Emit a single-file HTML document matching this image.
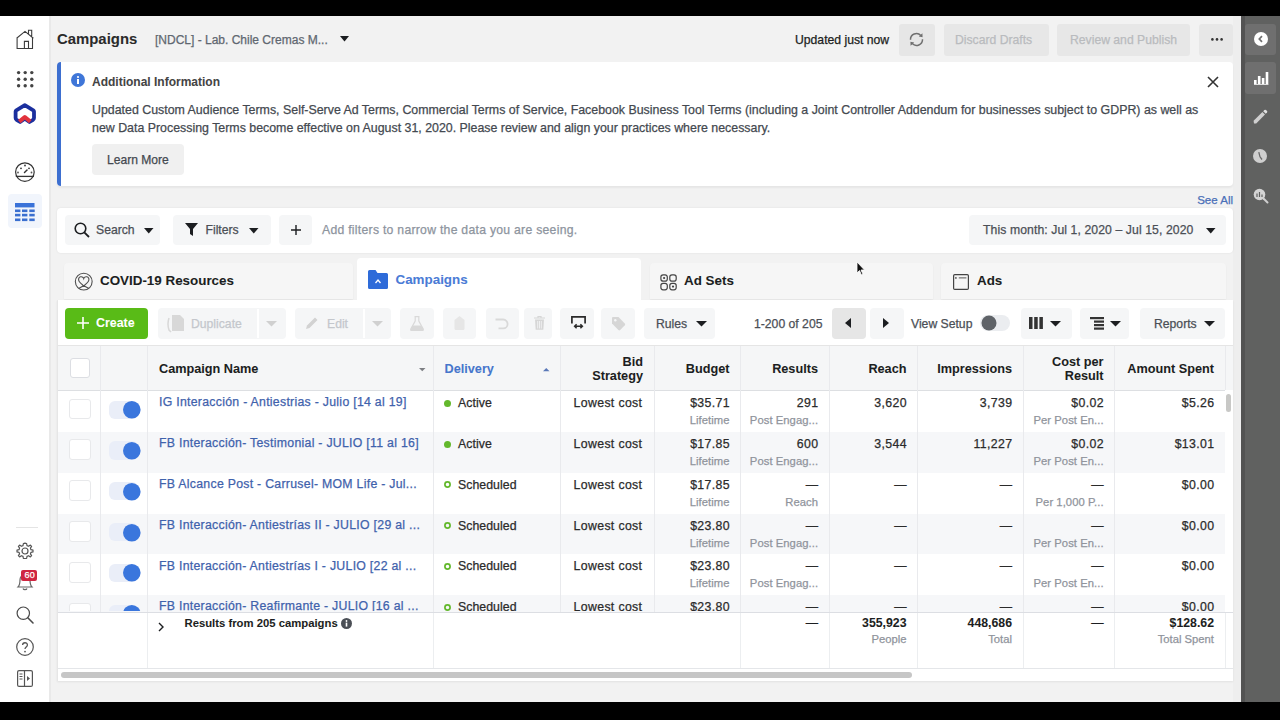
<!DOCTYPE html><html><head><meta charset="utf-8"><style>
*{box-sizing:border-box;margin:0;padding:0}
html,body{width:1280px;height:720px;overflow:hidden;background:#000;font-family:"Liberation Sans",sans-serif;color:#1c1e21}
#app{position:absolute;left:0;top:16px;width:1280px;height:686px;background:#f2f2f2;overflow:hidden}
.a{position:absolute}
.t{position:absolute;white-space:nowrap;line-height:1;-webkit-text-stroke:0.25px currentColor}

.btn{position:absolute;background:#ebebeb;border-radius:4px}
.lbtn{position:absolute;background:#f5f5f5;border-radius:4px}
.r{text-align:right}
svg{position:absolute;overflow:visible}
</style></head><body><div id="app"><div class="a" style="left:0px;top:0px;width:49px;height:686px;background:#fff;"></div><div class="a" style="left:49px;top:0px;width:2px;height:686px;background:#e9e9e9;"></div><svg style="left:16px;top:13px;" width="18" height="21" viewBox="0 0 18 21"><path d="M0.6 9.2 L9 2.4 L17.4 9.2 M1.1 8.6 V19.5 H16.5 V8.6 M8.4 19.5 V12.4 H12.5 V19.5 M12.5 5.6 V1.2 H15.7 V8.2" fill="none" stroke="#3c3c3c" stroke-width="1.1"/></svg><svg style="left:17px;top:55px;" width="17" height="17" viewBox="0 0 17 17"><circle cx="1.6" cy="1.6" r="1.7" fill="#444"/><circle cx="1.6" cy="8.2" r="1.7" fill="#444"/><circle cx="1.6" cy="14.8" r="1.7" fill="#444"/><circle cx="8.2" cy="1.6" r="1.7" fill="#444"/><circle cx="8.2" cy="8.2" r="1.7" fill="#444"/><circle cx="8.2" cy="14.8" r="1.7" fill="#444"/><circle cx="14.8" cy="1.6" r="1.7" fill="#444"/><circle cx="14.8" cy="8.2" r="1.7" fill="#444"/><circle cx="14.8" cy="14.8" r="1.7" fill="#444"/></svg><svg style="left:13px;top:86px;" width="24" height="23" viewBox="0 0 24 23"><path d="M11.8 3.2 L20.3 8.3 Q21 8.8 21 9.6 V16 Q21 17 20 17.8 L16.5 20 L11.8 16.8 L7.1 20 L3.6 17.8 Q2.6 17 2.6 16 V9.6 Q2.6 8.8 3.3 8.3 Z" fill="none" stroke="#1b2f9e" stroke-width="3.8" stroke-linejoin="round"/><path d="M6.3 19.6 L11.8 15 L17.3 19.6" fill="none" stroke="#e2323c" stroke-width="4" stroke-linejoin="round"/></svg><svg style="left:15px;top:146px;" width="20" height="20" viewBox="0 0 20 20"><circle cx="9.9" cy="10.1" r="9.3" fill="none" stroke="#333" stroke-width="1.2"/><path d="M.8 14.4 H19" stroke="#333" stroke-width="1.3"/><path d="M9.5 10.5 L12 8" stroke="#333" stroke-width="1.5" stroke-linecap="round"/><circle cx="10" cy="3.5" r=".9" fill="#333"/><circle cx="6" cy="6.3" r=".9" fill="#333"/><circle cx="14" cy="6.3" r=".9" fill="#333"/><circle cx="3" cy="10.5" r=".9" fill="#555"/><circle cx="16.5" cy="10.5" r=".9" fill="#555"/></svg><div class="a" style="left:8px;top:177.5px;width:34px;height:34.0px;background:#f1f5fc;border-radius:4px"></div><svg style="left:15px;top:186.5px;" width="20" height="19" viewBox="0 0 20 19"><rect x="0" y="0" width="19.5" height="4.4" fill="#3a72d8"/><rect x="0" y="6.5" width="5.4" height="2.6" fill="#3a6fd0"/><rect x="0" y="10.8" width="5.4" height="2.6" fill="#3a6fd0"/><rect x="0" y="15.5" width="5.4" height="2.6" fill="#3a6fd0"/><rect x="7" y="6.5" width="5.4" height="2.6" fill="#3a6fd0"/><rect x="7" y="10.8" width="5.4" height="2.6" fill="#3a6fd0"/><rect x="7" y="15.5" width="5.4" height="2.6" fill="#3a6fd0"/><rect x="14.3" y="6.5" width="5.4" height="2.6" fill="#3a6fd0"/><rect x="14.3" y="10.8" width="5.4" height="2.6" fill="#3a6fd0"/><rect x="14.3" y="15.5" width="5.4" height="2.6" fill="#3a6fd0"/></svg><div class="a" style="left:16px;top:511px;width:22px;height:1px;background:#e4e4e4;"></div><svg style="left:16px;top:526px;" width="18" height="18" viewBox="0 0 18 18"><path d="M9 1.2 L10.6 1.5 L11 3.6 L12.6 4.3 L14.4 3.1 L15.6 4.3 L14.4 6.1 L15 7.7 L17 8.1 V9.9 L15 10.3 L14.4 11.9 L15.6 13.7 L14.4 14.9 L12.6 13.7 L11 14.4 L10.6 16.5 H7.4 L7 14.4 L5.4 13.7 L3.6 14.9 L2.4 13.7 L3.6 11.9 L3 10.3 L1 9.9 V8.1 L3 7.7 L3.6 6.1 L2.4 4.3 L3.6 3.1 L5.4 4.3 L7 3.6 L7.4 1.5 Z" fill="none" stroke="#555" stroke-width="1.2" stroke-linejoin="round"/><circle cx="9" cy="9" r="3" fill="none" stroke="#555" stroke-width="1.2"/></svg><svg style="left:16px;top:555px;" width="18" height="20" viewBox="0 0 18 20"><path d="M2 16 C4 14 4 12 4 9 C4 6 6 4 9 4 C12 4 14 6 14 9 C14 12 14 14 16 16 Z M7 17.5 C7.5 19 10.5 19 11 17.5" fill="none" stroke="#666" stroke-width="1.2"/></svg><div class="a" style="left:21.2px;top:553.7px;width:16.3px;height:11.699999999999932px;background:#cf2540;border-radius:2px"></div><div class="t" style="top:555.46px;font-size:9px;color:#fff;letter-spacing:0.2px;left:24.5px;">60</div><svg style="left:16px;top:590px;" width="19" height="19" viewBox="0 0 19 19"><circle cx="7.3" cy="7.2" r="6.2" fill="none" stroke="#4a4a4a" stroke-width="1.2"/><path d="M11.8 11.8 L17 17" stroke="#4a4a4a" stroke-width="1.6" stroke-linecap="round"/></svg><svg style="left:16px;top:622px;" width="18" height="18" viewBox="0 0 18 18"><circle cx="9" cy="9" r="8.3" fill="none" stroke="#555" stroke-width="1.2"/><path d="M6.6 7 C6.6 4 11.4 4 11.4 7 C11.4 9 9 9 9 11" fill="none" stroke="#555" stroke-width="1.3"/><circle cx="9" cy="13.6" r=".9" fill="#555"/></svg><svg style="left:17px;top:654px;" width="16" height="17" viewBox="0 0 16 17"><rect x=".6" y=".6" width="14.8" height="15.8" rx="1.5" fill="none" stroke="#555" stroke-width="1.2"/><path d="M7.5 .6 V16.4" stroke="#555" stroke-width="1.2"/><path d="M2.5 4 H5.5 M2.5 6.5 H5.5 M2.5 9 H5.5" stroke="#555" stroke-width="1"/><path d="M10 6 L13 8.5 L10 11 Z" fill="#555"/></svg><div class="a" style="left:1233px;top:0px;width:8px;height:686px;background:#eeeeee;"></div><div class="a" style="left:1241px;top:0px;width:39px;height:686px;background:#606160;"></div><div class="a" style="left:1241px;top:0px;width:4px;height:686px;background:#535353;"></div><div class="a" style="left:1245px;top:7.5px;width:30.5px;height:31.0px;background:#6f6f6f;border-radius:3px"></div><svg style="left:1253.75px;top:15.75px;" width="14" height="14" viewBox="0 0 14 14"><circle cx="7" cy="7" r="7" fill="#fff"/><path d="M8 4.2 L5.3 7 L8 9.8" fill="none" stroke="#6f6f6f" stroke-width="1.7"/></svg><div class="a" style="left:1245px;top:46px;width:30.5px;height:31.5px;background:#6f6f6f;border-radius:3px"></div><svg style="left:1253.5px;top:56px;" width="15" height="13" viewBox="0 0 15 13"><rect x="0" y="8" width="2.6" height="4.5" fill="#fff"/><rect x="3.9" y="4" width="2.6" height="8.5" fill="#fff"/><rect x="7.8" y="6" width="2.6" height="6.5" fill="#fff"/><rect x="11.7" y="0" width="2.6" height="12.5" fill="#fff"/><rect x="0" y="12" width="14.3" height="1" fill="#ddd"/></svg><svg style="left:1252px;top:93px;" width="16" height="16" viewBox="0 0 16 16"><path d="M2 14.6 L1.6 11.8 L10.4 3 L13 5.6 L4.2 14.4 Z" fill="#cfcfcf"/><path d="M11.2 2.2 L12.4 1 Q13.2 .3 14 1 L15 2 Q15.7 2.8 15 3.6 L13.8 4.8 Z" fill="#e0e0e0"/></svg><svg style="left:1253px;top:132.6px;" width="14" height="14" viewBox="0 0 14 14"><circle cx="7" cy="7" r="7" fill="#cfcfcf"/><path d="M5.8 3.2 L7 7.8 L9 10.5" fill="none" stroke="#6a6a6a" stroke-width="1.3"/></svg><svg style="left:1253px;top:171.5px;" width="17" height="17" viewBox="0 0 17 17"><circle cx="6.5" cy="6.5" r="5.8" fill="#d4d4d4"/><path d="M10.5 10.5 L14.5 14.5" stroke="#cfcfcf" stroke-width="2" stroke-linecap="round"/><path d="M4 9 V5.5 M6.5 9 V4 M9 9 V6.5" stroke="#606160" stroke-width="1.2"/></svg><div class="t" style="top:15.69px;font-size:14.9px;color:#2a2a2a;font-weight:bold;-webkit-text-stroke:0.05px currentColor;left:57px;">Campaigns</div><div class="t" style="top:17.68px;font-size:12px;color:#606770;left:155px;">[NDCL] - Lab. Chile Cremas M...</div><svg style="left:339.5px;top:20px;" width="9" height="6" viewBox="0 0 9 6"><path d="M0 0 H9 L4.5 5.5 Z" fill="#1c1e21"/></svg><div class="t" style="top:17.51px;font-size:12.2px;color:#1c1e21;left:795px;">Updated just now</div><div class="a" style="left:899px;top:8px;width:35.5px;height:31.5px;background:#e6e6e6;border-radius:3px"></div><svg style="left:909px;top:15.5px;" width="15" height="15" viewBox="0 0 15 15"><path d="M1.5 7.8 A6 6 0 0 1 11.8 3.4 M13.5 7.2 A6 6 0 0 1 3.2 11.6" fill="none" stroke="#6f6f6f" stroke-width="1.5"/><path d="M9.8 4.6 L13.6 5.2 L13.4 1.2 Z M5.2 10.4 L1.4 9.8 L1.6 13.8 Z" fill="#6f6f6f"/></svg><div class="a" style="left:944px;top:8px;width:105px;height:31.5px;background:#e7e7e7;border-radius:3px"></div><div class="t" style="top:17.51px;font-size:12.2px;color:#b9bbbe;left:955px;">Discard Drafts</div><div class="a" style="left:1057px;top:8px;width:133px;height:31.5px;background:#e7e7e7;border-radius:3px"></div><div class="t" style="top:17.51px;font-size:12.2px;color:#b9bbbe;left:1070px;">Review and Publish</div><div class="a" style="left:1199px;top:8px;width:34px;height:31.5px;background:#e7e7e7;border-radius:3px"></div><svg style="left:1210.5px;top:22px;" width="12" height="3" viewBox="0 0 12 3"><circle cx="1.4" cy="1.4" r="1.3" fill="#333"/><circle cx="6" cy="1.4" r="1.3" fill="#333"/><circle cx="10.6" cy="1.4" r="1.3" fill="#333"/></svg><div class="a" style="left:57px;top:46px;width:1176px;height:124px;background:#fff;border-radius:4px;box-shadow:0 2px 2px rgba(0,0,0,.05)"></div><div class="a" style="left:57px;top:46px;width:3.5px;height:124px;background:#3d6fd0;border-radius:4px 0 0 4px"></div><svg style="left:71px;top:57px;" width="14" height="14" viewBox="0 0 14 14"><circle cx="7" cy="7" r="7" fill="#3f76d8"/><rect x="6" y="6" width="2" height="5" fill="#fff"/><circle cx="7" cy="4" r="1.1" fill="#fff"/></svg><div class="t" style="top:59.68px;font-size:12px;color:#444;font-weight:bold;-webkit-text-stroke:0.05px currentColor;left:92px;">Additional Information</div><svg style="left:1206.5px;top:59.8px;" width="12" height="12" viewBox="0 0 12 12"><path d="M1 1 L11 11 M11 1 L1 11" stroke="#333" stroke-width="1.6"/></svg><div class="t" style="top:87.85px;font-size:12.38px;color:#444950;left:92px;">Updated Custom Audience Terms, Self-Serve Ad Terms, Commercial Terms of Service, Facebook Business Tool Terms (including a Joint Controller Addendum for businesses subject to GDPR) as well as</div><div class="t" style="top:105.85px;font-size:12.38px;color:#444950;left:92px;">new Data Processing Terms become effective on August 31, 2020. Please review and align your practices where necessary.</div><div class="a" style="left:92px;top:128px;width:92px;height:31px;background:#f0f0f0;border-radius:4px"></div><div class="t" style="top:137.59px;font-size:12.1px;color:#444950;left:107px;">Learn More</div><div class="t" style="top:179.11px;font-size:11.5px;color:#4a6fb8;right:47.00px;text-align:right;">See All</div><div class="a" style="left:57px;top:191.5px;width:1176px;height:45.5px;background:#fff;border-radius:4px;box-shadow:0 0 2px rgba(0,0,0,.09)"></div><div class="a" style="left:65px;top:199px;width:95px;height:30px;background:#f5f6f7;border-radius:4px"></div><svg style="left:74px;top:206px;" width="16" height="16" viewBox="0 0 16 16"><circle cx="6.5" cy="6.5" r="5.3" fill="none" stroke="#1c1e21" stroke-width="1.6"/><path d="M10.3 10.3 L15 15" stroke="#1c1e21" stroke-width="1.8"/></svg><div class="t" style="top:207.51px;font-size:12.2px;color:#4b4f56;left:96px;">Search</div><svg style="left:143.5px;top:212px;" width="9.5" height="6" viewBox="0 0 9.5 6"><path d="M0 0 H9.5 L4.75 5.5 Z" fill="#1c1e21"/></svg><div class="a" style="left:173px;top:199px;width:98px;height:30px;background:#f5f6f7;border-radius:4px"></div><svg style="left:185px;top:207px;" width="13" height="14" viewBox="0 0 13 14"><path d="M0 0 H13 L8 6 V13 L5 11 V6 Z" fill="#1c1e21"/></svg><div class="t" style="top:207.51px;font-size:12.2px;color:#4b4f56;left:205.5px;">Filters</div><svg style="left:248.5px;top:212px;" width="9.5" height="6" viewBox="0 0 9.5 6"><path d="M0 0 H9.5 L4.75 5.5 Z" fill="#1c1e21"/></svg><div class="a" style="left:279px;top:199px;width:33px;height:30px;background:#f5f6f7;border-radius:4px"></div><svg style="left:290.5px;top:208.5px;" width="10" height="10" viewBox="0 0 10 10"><path d="M5 0 V10 M0 5 H10" stroke="#1c1e21" stroke-width="1.4"/></svg><div class="t" style="top:207.51px;font-size:12.2px;color:#8d949e;letter-spacing:0.28px;left:322px;">Add filters to narrow the data you are seeing.</div><div class="a" style="left:969px;top:199px;width:257px;height:30px;background:#f5f6f7;border-radius:4px"></div><div class="t" style="top:207.51px;font-size:12.2px;color:#4b4f56;letter-spacing:0.1px;left:983px;">This month: Jul 1, 2020 &#8211; Jul 15, 2020</div><svg style="left:1205.5px;top:212px;" width="9.5" height="6" viewBox="0 0 9.5 6"><path d="M0 0 H9.5 L4.75 5.5 Z" fill="#1c1e21"/></svg><div class="a" style="left:64px;top:247px;width:289px;height:36px;background:#f6f6f6;border-radius:4px 4px 0 0;box-shadow:0 1px 2px rgba(0,0,0,.06)"></div><div class="a" style="left:650px;top:247px;width:283px;height:36px;background:#f6f6f6;border-radius:4px 4px 0 0;box-shadow:0 1px 2px rgba(0,0,0,.06)"></div><div class="a" style="left:941px;top:247px;width:285px;height:36px;background:#f6f6f6;border-radius:4px 4px 0 0;box-shadow:0 1px 2px rgba(0,0,0,.06)"></div><div class="a" style="left:56.5px;top:284px;width:1176.5px;height:381px;background:#fff;box-shadow:0 1px 2px rgba(0,0,0,.07);border-left:1px solid #e8e8e8"></div><div class="a" style="left:357px;top:242px;width:284px;height:44px;background:#fff;border-radius:4px 4px 0 0"></div><svg style="left:74px;top:256px;" width="20" height="20" viewBox="0 0 20 20"><circle cx="9.75" cy="9.6" r="8.4" fill="none" stroke="#505050" stroke-width="1.1"/><path d="M4.6 16.6 L10.5 13.2 C13.5 11 15.5 8.5 14.8 6.5 C14.2 4.8 12 4.2 10.8 5.2 C10.3 5.6 9.9 6.1 9.75 6.6 C9.6 6.1 9.2 5.6 8.7 5.2 C7.5 4.2 5.3 4.8 4.7 6.5 C4 8.5 6 11 9 13.2 L14.9 16.6" fill="none" stroke="#505050" stroke-width="1.1"/></svg><div class="t" style="top:258.48px;font-size:13.4px;color:#1c1e21;font-weight:bold;-webkit-text-stroke:0.05px currentColor;left:100px;">COVID-19 Resources</div><svg style="left:368px;top:254px;" width="20" height="19" viewBox="0 0 20 19"><path d="M0 1.5 Q0 0 1.5 0 H7.5 L9.5 3 H18.5 Q20 3 20 4.5 V17.5 Q20 19 18.5 19 H1.5 Q0 19 0 17.5 Z" fill="#2e6bd9"/><path d="M7.5 13 L10 10 L12.5 13" fill="none" stroke="#fff" stroke-width="1.3"/></svg><div class="t" style="top:257.48px;font-size:13.4px;color:#4a7bd6;font-weight:bold;-webkit-text-stroke:0.05px currentColor;left:395.5px;">Campaigns</div><svg style="left:660px;top:257.5px;" width="17" height="17" viewBox="0 0 17 17"><rect x=".9" y=".9" width="6.4" height="6.2" rx="2.2" fill="none" stroke="#444" stroke-width="1.2"/><rect x="9.8" y=".9" width="6.4" height="6.2" rx="2.2" fill="none" stroke="#444" stroke-width="1.2"/><rect x=".9" y="9.3" width="6.4" height="6.5" rx="2.2" fill="none" stroke="#444" stroke-width="1.2"/><rect x="9.8" y="9.3" width="6.4" height="6.5" rx="2.2" fill="none" stroke="#444" stroke-width="1.2"/><circle cx="4.1" cy="4" r="1.1" fill="#444"/><circle cx="13" cy="12.6" r="1.1" fill="#444"/></svg><div class="t" style="top:258.48px;font-size:13.4px;color:#1c1e21;font-weight:bold;-webkit-text-stroke:0.05px currentColor;left:684px;">Ad Sets</div><svg style="left:953px;top:257.5px;" width="16" height="16" viewBox="0 0 16 16"><rect x=".6" y=".6" width="14.8" height="14.8" rx="1.2" fill="none" stroke="#444" stroke-width="1.2"/><circle cx="2.9" cy="3.9" r=".9" fill="#555"/><path d="M5.8 3.9 H13.4" stroke="#555" stroke-width="1"/></svg><div class="t" style="top:258.48px;font-size:13.4px;color:#1c1e21;font-weight:bold;-webkit-text-stroke:0.05px currentColor;left:977px;">Ads</div><div class="a" style="left:65px;top:291.5px;width:83px;height:31.5px;background:#59bb17;border-radius:4px"></div><svg style="left:77px;top:301px;" width="12" height="12" viewBox="0 0 12 12"><path d="M6 0 V12 M0 6 H12" stroke="#fff" stroke-width="1.6"/></svg><div class="t" style="top:301.34px;font-size:12.4px;color:#fff;font-weight:bold;-webkit-text-stroke:0.05px currentColor;left:96px;">Create</div><div class="a" style="left:157.5px;top:291.5px;width:128.5px;height:31.5px;background:#f5f6f7;border-radius:4px"></div><div class="a" style="left:257px;top:293px;width:1.5px;height:28.5px;background:#fff;"></div><svg style="left:165px;top:298px;" width="22" height="20" viewBox="0 0 22 20"><path d="M7 1 H15 L19 5 V17 H7 Z" fill="#d8d8d8"/><path d="M4 4 Q2 10 4 16 L6 18" fill="none" stroke="#d8d8d8" stroke-width="1.5"/></svg><div class="t" style="top:301.51px;font-size:12.2px;color:#c4c7cc;left:191px;">Duplicate</div><svg style="left:266px;top:305px;" width="11" height="6" viewBox="0 0 11 6"><path d="M0 0 H11 L5.5 5.5 Z" fill="#d0d0d0"/></svg><div class="a" style="left:294.5px;top:291.5px;width:96.5px;height:31.5px;background:#f5f6f7;border-radius:4px"></div><div class="a" style="left:363px;top:293px;width:1.5px;height:28.5px;background:#fff;"></div><svg style="left:305px;top:300px;" width="14" height="14" viewBox="0 0 14 14"><path d="M1 13 L2 9.5 L10 1.5 L12.5 4 L4.5 12 Z" fill="#d2d2d2"/></svg><div class="t" style="top:301.51px;font-size:12.2px;color:#c4c7cc;left:327px;">Edit</div><svg style="left:372px;top:305px;" width="11" height="6" viewBox="0 0 11 6"><path d="M0 0 H11 L5.5 5.5 Z" fill="#d0d0d0"/></svg><div class="a" style="left:400px;top:291.5px;width:34px;height:31.5px;background:#f5f6f7;border-radius:4px"></div><svg style="left:410px;top:299.5px;" width="14" height="15" viewBox="0 0 14 15"><path d="M4.5 .6 H9.5 M5.2 .6 V5 L.8 13 Q.3 14.5 1.8 14.5 H12.2 Q13.7 14.5 13.2 13 L8.8 5 V.6" fill="none" stroke="#d9d9d9" stroke-width="1.2"/><path d="M2.6 9.5 H11.4 L13.2 13 Q13.7 14.5 12.2 14.5 H1.8 Q.3 14.5 .8 13 Z" fill="#d9d9d9"/></svg><div class="a" style="left:442.5px;top:291.5px;width:33.5px;height:31.5px;background:#f5f6f7;border-radius:4px"></div><svg style="left:453.5px;top:300px;" width="11" height="14" viewBox="0 0 11 14"><path d="M5.5 0 L10.5 4 V12.5 Q10.5 14 9 14 H2 Q.5 14 .5 12.5 V4 Z" fill="#e6e6e6"/></svg><div class="a" style="left:486px;top:291.5px;width:33px;height:31.5px;background:#f5f6f7;border-radius:4px"></div><svg style="left:495px;top:301.5px;" width="14" height="13" viewBox="0 0 14 13"><path d="M.5 1.5 H8.2 A4.4 4.4 0 0 1 8.2 10.3 H3.5" fill="none" stroke="#d9d9d9" stroke-width="1.8"/></svg><div class="a" style="left:524px;top:291.5px;width:28px;height:31.5px;background:#f5f6f7;border-radius:4px"></div><svg style="left:533.5px;top:300px;" width="11" height="14" viewBox="0 0 11 14"><path d="M0 2 H11 M4 2 V.5 H7 V2" fill="none" stroke="#d6d6d6" stroke-width="1.2"/><path d="M1 3.5 H10 L9.3 13.8 H1.7 Z" fill="#d6d6d6"/><path d="M3.7 5 V12.5 M5.5 5 V12.5 M7.3 5 V12.5" stroke="#f5f6f7" stroke-width=".8"/></svg><div class="a" style="left:560px;top:291.5px;width:34px;height:31.5px;background:#f5f6f7;border-radius:4px"></div><svg style="left:571px;top:300px;" width="15" height="13" viewBox="0 0 15 13"><path d="M.9 7.6 V.9 H14.1 V7.6" fill="none" stroke="#2a2a2a" stroke-width="1.7"/><path d="M3.6 10.2 H11.4 M5.6 8.2 L3.6 10.2 L5.6 12.2 M9.4 8.2 L11.4 10.2 L9.4 12.2" fill="none" stroke="#2a2a2a" stroke-width="1.5"/></svg><div class="a" style="left:601px;top:291.5px;width:34px;height:31.5px;background:#f5f6f7;border-radius:4px"></div><svg style="left:610.5px;top:299.5px;" width="15" height="16" viewBox="0 0 15 16"><path d="M1.5 1 H7.5 L13.8 7.5 Q14.6 8.4 13.8 9.3 L9.2 14 Q8.3 14.8 7.4 14 L1 7.6 V1.5 Z" fill="#d6d6d6"/><circle cx="4.3" cy="4.3" r="1.2" fill="#f5f6f7"/></svg><div class="a" style="left:644px;top:291.5px;width:71px;height:31.5px;background:#f5f6f7;border-radius:4px"></div><div class="t" style="top:301.51px;font-size:12.2px;color:#4b4f56;left:656px;">Rules</div><svg style="left:696px;top:305px;" width="11" height="6" viewBox="0 0 11 6"><path d="M0 0 H11 L5.5 5.5 Z" fill="#1c1e21"/></svg><div class="t" style="top:301.51px;font-size:12.2px;color:#4b4f56;left:754px;">1-200 of 205</div><div class="a" style="left:832px;top:291.5px;width:33.5px;height:31.5px;background:#e6e6e6;border-radius:4px"></div><svg style="left:845px;top:302px;" width="6" height="10" viewBox="0 0 6 10"><path d="M6 0 V10 L0 5 Z" fill="#1c1e21"/></svg><div class="a" style="left:870px;top:291.5px;width:34px;height:31.5px;background:#f5f6f7;border-radius:4px"></div><svg style="left:883px;top:302px;" width="6" height="10" viewBox="0 0 6 10"><path d="M0 0 V10 L6 5 Z" fill="#1c1e21"/></svg><div class="t" style="top:301.51px;font-size:12.2px;color:#4b4f56;left:911px;">View Setup</div><div class="a" style="left:980px;top:299px;width:30px;height:16px;background:#ebedf0;border-radius:8px"></div><svg style="left:981px;top:299px;" width="16" height="16" viewBox="0 0 16 16"><circle cx="8" cy="8" r="7.5" fill="#5f6368"/></svg><div class="a" style="left:1021px;top:291.5px;width:50.5px;height:31.5px;background:#f5f6f7;border-radius:4px"></div><svg style="left:1029px;top:301px;" width="14" height="12" viewBox="0 0 14 12"><rect x="0" y="0" width="3.5" height="12" fill="#333"/><rect x="5.2" y="0" width="3.5" height="12" fill="#333"/><rect x="10.4" y="0" width="3.5" height="12" fill="#333"/></svg><svg style="left:1050px;top:305px;" width="11" height="6" viewBox="0 0 11 6"><path d="M0 0 H11 L5.5 5.5 Z" fill="#1c1e21"/></svg><div class="a" style="left:1080px;top:291.5px;width:49px;height:31.5px;background:#f5f6f7;border-radius:4px"></div><svg style="left:1090px;top:301px;" width="14" height="13" viewBox="0 0 14 13"><rect x="0" y="0" width="14" height="2.2" fill="#333"/><rect x="4" y="3.5" width="10" height="2.2" fill="#333"/><rect x="4" y="7" width="10" height="2.2" fill="#333"/><rect x="4" y="10.5" width="10" height="2.2" fill="#333"/></svg><svg style="left:1110px;top:305px;" width="11" height="6" viewBox="0 0 11 6"><path d="M0 0 H11 L5.5 5.5 Z" fill="#1c1e21"/></svg><div class="a" style="left:1140px;top:291.5px;width:85px;height:31.5px;background:#f5f6f7;border-radius:4px"></div><div class="t" style="top:301.51px;font-size:12.2px;color:#4b4f56;left:1154px;">Reports</div><svg style="left:1204px;top:305px;" width="11" height="6" viewBox="0 0 11 6"><path d="M0 0 H11 L5.5 5.5 Z" fill="#1c1e21"/></svg><div class="a" style="left:57px;top:330px;width:1176px;height:43.5px;background:#f5f6f7;"></div><div class="a" style="left:57px;top:329px;width:1176px;height:1px;background:#e5e5e5;"></div><div class="a" style="left:57px;top:373.5px;width:1176px;height:1.0px;background:#dddfe2;"></div><div class="a" style="left:57px;top:375.2px;width:1168px;height:40.80000000000001px;background:#fff;"></div><div class="a" style="left:57px;top:416.0px;width:1168px;height:40.80000000000001px;background:#f6f7f9;"></div><div class="a" style="left:57px;top:456.8px;width:1168px;height:40.80000000000001px;background:#fff;"></div><div class="a" style="left:57px;top:497.6px;width:1168px;height:40.799999999999955px;background:#f6f7f9;"></div><div class="a" style="left:57px;top:538.4000000000001px;width:1168px;height:40.799999999999955px;background:#fff;"></div><div class="a" style="left:57px;top:579.2px;width:1168px;height:16.799999999999955px;background:#f6f7f9;"></div><div class="t" style="top:346.98px;font-size:12.7px;color:#1c1e21;font-weight:bold;-webkit-text-stroke:0.05px currentColor;left:159.0px;">Campaign Name</div><div class="t" style="top:346.98px;font-size:12.7px;color:#4676cc;font-weight:bold;-webkit-text-stroke:0.05px currentColor;left:444.5px;">Delivery</div><div class="t" style="top:339.58px;font-size:12.7px;color:#1c1e21;font-weight:bold;-webkit-text-stroke:0.05px currentColor;right:637.00px;text-align:right;">Bid</div><div class="t" style="top:353.58px;font-size:12.7px;color:#1c1e21;font-weight:bold;-webkit-text-stroke:0.05px currentColor;right:637.00px;text-align:right;">Strategy</div><div class="t" style="top:346.98px;font-size:12.7px;color:#1c1e21;font-weight:bold;-webkit-text-stroke:0.05px currentColor;right:550.50px;text-align:right;">Budget</div><div class="t" style="top:346.98px;font-size:12.7px;color:#1c1e21;font-weight:bold;-webkit-text-stroke:0.05px currentColor;right:462.00px;text-align:right;">Results</div><div class="t" style="top:346.98px;font-size:12.7px;color:#1c1e21;font-weight:bold;-webkit-text-stroke:0.05px currentColor;right:373.50px;text-align:right;">Reach</div><div class="t" style="top:346.98px;font-size:12.7px;color:#1c1e21;font-weight:bold;-webkit-text-stroke:0.05px currentColor;right:268.00px;text-align:right;">Impressions</div><div class="t" style="top:339.58px;font-size:12.7px;color:#1c1e21;font-weight:bold;-webkit-text-stroke:0.05px currentColor;right:176.50px;text-align:right;">Cost per</div><div class="t" style="top:353.58px;font-size:12.7px;color:#1c1e21;font-weight:bold;-webkit-text-stroke:0.05px currentColor;right:176.50px;text-align:right;">Result</div><div class="t" style="top:346.98px;font-size:12.7px;color:#1c1e21;font-weight:bold;-webkit-text-stroke:0.05px currentColor;right:66.00px;text-align:right;">Amount Spent</div><div class="a" style="left:69.5px;top:342px;width:20.0px;height:20px;background:#fff;border:1px solid #dcdee3;border-radius:3px"></div><svg style="left:419px;top:352px;" width="6.5" height="3.5" viewBox="0 0 6.5 3.5"><path d="M0 0 H6.5 L3.25 3.2 Z" fill="#7d7f83"/></svg><svg style="left:543px;top:351.5px;" width="6.5" height="3.5" viewBox="0 0 6.5 3.5"><path d="M0 3.2 H6.5 L3.25 0 Z" fill="#5a78b8"/></svg><div class="a" style="left:0;top:374px;width:1280px;height:221px;overflow:hidden"><div class="a" style="left:69px;top:8.600000000000023px;width:22px;height:20.899999999999977px;background:#fff;border:1.5px solid #e8e9eb;border-radius:3px"></div><div class="a" style="left:109.3px;top:10.5px;width:28.700000000000003px;height:18.30000000000001px;background:#eaeef8;border-radius:6px"></div><svg style="left:122.7px;top:11.100000000000023px;" width="17.6" height="17.6" viewBox="0 0 17.6 17.6"><circle cx="8.8" cy="8.8" r="8.8" fill="#3a76dd"/></svg><div class="t" style="top:6.32px;font-size:12.3px;color:#3f62ac;letter-spacing:0.28px;left:159px;">IG Interacción - Antiestrias - Julio [14 al 19]</div><svg style="left:443.5px;top:9.699999999999989px;" width="7" height="7" viewBox="0 0 7 7"><circle cx="3.5" cy="3.5" r="3.5" fill="#63b82c"/></svg><div class="t" style="top:7.12px;font-size:12.3px;color:#2b2b2b;letter-spacing:0.05px;left:458px;">Active</div><div class="t" style="top:7.12px;font-size:12.3px;color:#2b2b2b;letter-spacing:0.35px;right:637.65px;text-align:right;">Lowest cost</div><div class="t" style="top:7.12px;font-size:12.3px;color:#2b2b2b;letter-spacing:0.35px;right:550.15px;text-align:right;">$35.71</div><div class="t" style="top:25.13px;font-size:11.25px;color:#90949c;letter-spacing:0.05px;right:550.45px;text-align:right;">Lifetime</div><div class="t" style="top:7.12px;font-size:12.3px;color:#2b2b2b;letter-spacing:0.35px;right:461.65px;text-align:right;">291</div><div class="t" style="top:25.13px;font-size:11.25px;color:#90949c;letter-spacing:0.05px;right:461.95px;text-align:right;">Post Engag...</div><div class="t" style="top:7.12px;font-size:12.3px;color:#2b2b2b;letter-spacing:0.35px;right:373.15px;text-align:right;">3,620</div><div class="t" style="top:7.12px;font-size:12.3px;color:#2b2b2b;letter-spacing:0.35px;right:267.65px;text-align:right;">3,739</div><div class="t" style="top:7.12px;font-size:12.3px;color:#2b2b2b;letter-spacing:0.35px;right:176.15px;text-align:right;">$0.02</div><div class="t" style="top:25.13px;font-size:11.25px;color:#90949c;letter-spacing:0.05px;right:176.45px;text-align:right;">Per Post En...</div><div class="t" style="top:7.12px;font-size:12.3px;color:#2b2b2b;letter-spacing:0.35px;right:65.65px;text-align:right;">$5.26</div><div class="a" style="left:69px;top:49.400000000000034px;width:22px;height:20.899999999999977px;background:#fff;border:1.5px solid #e8e9eb;border-radius:3px"></div><div class="a" style="left:109.3px;top:51.30000000000001px;width:28.700000000000003px;height:18.30000000000001px;background:#eaeef8;border-radius:6px"></div><svg style="left:122.7px;top:51.900000000000034px;" width="17.6" height="17.6" viewBox="0 0 17.6 17.6"><circle cx="8.8" cy="8.8" r="8.8" fill="#3a76dd"/></svg><div class="t" style="top:47.12px;font-size:12.3px;color:#3f62ac;letter-spacing:0.28px;left:159px;">FB Interacción- Testimonial - JULIO [11 al 16]</div><svg style="left:443.5px;top:50.5px;" width="7" height="7" viewBox="0 0 7 7"><circle cx="3.5" cy="3.5" r="3.5" fill="#63b82c"/></svg><div class="t" style="top:47.92px;font-size:12.3px;color:#2b2b2b;letter-spacing:0.05px;left:458px;">Active</div><div class="t" style="top:47.92px;font-size:12.3px;color:#2b2b2b;letter-spacing:0.35px;right:637.65px;text-align:right;">Lowest cost</div><div class="t" style="top:47.92px;font-size:12.3px;color:#2b2b2b;letter-spacing:0.35px;right:550.15px;text-align:right;">$17.85</div><div class="t" style="top:65.93px;font-size:11.25px;color:#90949c;letter-spacing:0.05px;right:550.45px;text-align:right;">Lifetime</div><div class="t" style="top:47.92px;font-size:12.3px;color:#2b2b2b;letter-spacing:0.35px;right:461.65px;text-align:right;">600</div><div class="t" style="top:65.93px;font-size:11.25px;color:#90949c;letter-spacing:0.05px;right:461.95px;text-align:right;">Post Engag...</div><div class="t" style="top:47.92px;font-size:12.3px;color:#2b2b2b;letter-spacing:0.35px;right:373.15px;text-align:right;">3,544</div><div class="t" style="top:47.92px;font-size:12.3px;color:#2b2b2b;letter-spacing:0.35px;right:267.65px;text-align:right;">11,227</div><div class="t" style="top:47.92px;font-size:12.3px;color:#2b2b2b;letter-spacing:0.35px;right:176.15px;text-align:right;">$0.02</div><div class="t" style="top:65.93px;font-size:11.25px;color:#90949c;letter-spacing:0.05px;right:176.45px;text-align:right;">Per Post En...</div><div class="t" style="top:47.92px;font-size:12.3px;color:#2b2b2b;letter-spacing:0.35px;right:65.65px;text-align:right;">$13.01</div><div class="a" style="left:69px;top:90.20000000000005px;width:22px;height:20.899999999999977px;background:#fff;border:1.5px solid #e8e9eb;border-radius:3px"></div><div class="a" style="left:109.3px;top:92.10000000000002px;width:28.700000000000003px;height:18.30000000000001px;background:#eaeef8;border-radius:6px"></div><svg style="left:122.7px;top:92.70000000000005px;" width="17.6" height="17.6" viewBox="0 0 17.6 17.6"><circle cx="8.8" cy="8.8" r="8.8" fill="#3a76dd"/></svg><div class="t" style="top:87.92px;font-size:12.3px;color:#3f62ac;letter-spacing:0.28px;left:159px;">FB Alcance Post - Carrusel- MOM Life - Jul...</div><svg style="left:443.5px;top:91.30000000000001px;" width="7" height="7" viewBox="0 0 7 7"><circle cx="3.5" cy="3.5" r="2.6" fill="none" stroke="#63b82c" stroke-width="1.7"/></svg><div class="t" style="top:88.72px;font-size:12.3px;color:#2b2b2b;letter-spacing:0.05px;left:458px;">Scheduled</div><div class="t" style="top:88.72px;font-size:12.3px;color:#2b2b2b;letter-spacing:0.35px;right:637.65px;text-align:right;">Lowest cost</div><div class="t" style="top:88.72px;font-size:12.3px;color:#2b2b2b;letter-spacing:0.35px;right:550.15px;text-align:right;">$17.85</div><div class="t" style="top:106.73px;font-size:11.25px;color:#90949c;letter-spacing:0.05px;right:550.45px;text-align:right;">Lifetime</div><div class="t" style="top:88.72px;font-size:12.3px;color:#2b2b2b;letter-spacing:0.35px;right:461.65px;text-align:right;">&#8212;</div><div class="t" style="top:106.73px;font-size:11.25px;color:#90949c;letter-spacing:0.05px;right:461.95px;text-align:right;">Reach</div><div class="t" style="top:88.72px;font-size:12.3px;color:#2b2b2b;letter-spacing:0.35px;right:373.15px;text-align:right;">&#8212;</div><div class="t" style="top:88.72px;font-size:12.3px;color:#2b2b2b;letter-spacing:0.35px;right:267.65px;text-align:right;">&#8212;</div><div class="t" style="top:88.72px;font-size:12.3px;color:#2b2b2b;letter-spacing:0.35px;right:176.15px;text-align:right;">&#8212;</div><div class="t" style="top:106.73px;font-size:11.25px;color:#90949c;letter-spacing:0.05px;right:176.45px;text-align:right;">Per 1,000 P...</div><div class="t" style="top:88.72px;font-size:12.3px;color:#2b2b2b;letter-spacing:0.35px;right:65.65px;text-align:right;">$0.00</div><div class="a" style="left:69px;top:131.0px;width:22px;height:20.899999999999977px;background:#fff;border:1.5px solid #e8e9eb;border-radius:3px"></div><div class="a" style="left:109.3px;top:132.89999999999998px;width:28.700000000000003px;height:18.299999999999955px;background:#eaeef8;border-radius:6px"></div><svg style="left:122.7px;top:133.5px;" width="17.6" height="17.6" viewBox="0 0 17.6 17.6"><circle cx="8.8" cy="8.8" r="8.8" fill="#3a76dd"/></svg><div class="t" style="top:128.72px;font-size:12.3px;color:#3f62ac;letter-spacing:0.28px;left:159px;">FB Interacción- Antiestrías II - JULIO [29 al ...</div><svg style="left:443.5px;top:132.10000000000002px;" width="7" height="7" viewBox="0 0 7 7"><circle cx="3.5" cy="3.5" r="2.6" fill="none" stroke="#63b82c" stroke-width="1.7"/></svg><div class="t" style="top:129.52px;font-size:12.3px;color:#2b2b2b;letter-spacing:0.05px;left:458px;">Scheduled</div><div class="t" style="top:129.52px;font-size:12.3px;color:#2b2b2b;letter-spacing:0.35px;right:637.65px;text-align:right;">Lowest cost</div><div class="t" style="top:129.52px;font-size:12.3px;color:#2b2b2b;letter-spacing:0.35px;right:550.15px;text-align:right;">$23.80</div><div class="t" style="top:147.52px;font-size:11.25px;color:#90949c;letter-spacing:0.05px;right:550.45px;text-align:right;">Lifetime</div><div class="t" style="top:129.52px;font-size:12.3px;color:#2b2b2b;letter-spacing:0.35px;right:461.65px;text-align:right;">&#8212;</div><div class="t" style="top:147.52px;font-size:11.25px;color:#90949c;letter-spacing:0.05px;right:461.95px;text-align:right;">Post Engag...</div><div class="t" style="top:129.52px;font-size:12.3px;color:#2b2b2b;letter-spacing:0.35px;right:373.15px;text-align:right;">&#8212;</div><div class="t" style="top:129.52px;font-size:12.3px;color:#2b2b2b;letter-spacing:0.35px;right:267.65px;text-align:right;">&#8212;</div><div class="t" style="top:129.52px;font-size:12.3px;color:#2b2b2b;letter-spacing:0.35px;right:176.15px;text-align:right;">&#8212;</div><div class="t" style="top:147.52px;font-size:11.25px;color:#90949c;letter-spacing:0.05px;right:176.45px;text-align:right;">Per Post En...</div><div class="t" style="top:129.52px;font-size:12.3px;color:#2b2b2b;letter-spacing:0.35px;right:65.65px;text-align:right;">$0.00</div><div class="a" style="left:69px;top:171.80000000000007px;width:22px;height:20.899999999999977px;background:#fff;border:1.5px solid #e8e9eb;border-radius:3px"></div><div class="a" style="left:109.3px;top:173.70000000000005px;width:28.700000000000003px;height:18.299999999999955px;background:#eaeef8;border-radius:6px"></div><svg style="left:122.7px;top:174.30000000000007px;" width="17.6" height="17.6" viewBox="0 0 17.6 17.6"><circle cx="8.8" cy="8.8" r="8.8" fill="#3a76dd"/></svg><div class="t" style="top:169.52px;font-size:12.3px;color:#3f62ac;letter-spacing:0.28px;left:159px;">FB Interacción- Antiestrías I - JULIO [22 al ...</div><svg style="left:443.5px;top:172.9000000000001px;" width="7" height="7" viewBox="0 0 7 7"><circle cx="3.5" cy="3.5" r="2.6" fill="none" stroke="#63b82c" stroke-width="1.7"/></svg><div class="t" style="top:170.32px;font-size:12.3px;color:#2b2b2b;letter-spacing:0.05px;left:458px;">Scheduled</div><div class="t" style="top:170.32px;font-size:12.3px;color:#2b2b2b;letter-spacing:0.35px;right:637.65px;text-align:right;">Lowest cost</div><div class="t" style="top:170.32px;font-size:12.3px;color:#2b2b2b;letter-spacing:0.35px;right:550.15px;text-align:right;">$23.80</div><div class="t" style="top:188.32px;font-size:11.25px;color:#90949c;letter-spacing:0.05px;right:550.45px;text-align:right;">Lifetime</div><div class="t" style="top:170.32px;font-size:12.3px;color:#2b2b2b;letter-spacing:0.35px;right:461.65px;text-align:right;">&#8212;</div><div class="t" style="top:188.32px;font-size:11.25px;color:#90949c;letter-spacing:0.05px;right:461.95px;text-align:right;">Post Engag...</div><div class="t" style="top:170.32px;font-size:12.3px;color:#2b2b2b;letter-spacing:0.35px;right:373.15px;text-align:right;">&#8212;</div><div class="t" style="top:170.32px;font-size:12.3px;color:#2b2b2b;letter-spacing:0.35px;right:267.65px;text-align:right;">&#8212;</div><div class="t" style="top:170.32px;font-size:12.3px;color:#2b2b2b;letter-spacing:0.35px;right:176.15px;text-align:right;">&#8212;</div><div class="t" style="top:188.32px;font-size:11.25px;color:#90949c;letter-spacing:0.05px;right:176.45px;text-align:right;">Per Post En...</div><div class="t" style="top:170.32px;font-size:12.3px;color:#2b2b2b;letter-spacing:0.35px;right:65.65px;text-align:right;">$0.00</div><div class="a" style="left:69px;top:212.60000000000002px;width:22px;height:20.899999999999977px;background:#fff;border:1.5px solid #e8e9eb;border-radius:3px"></div><div class="a" style="left:109.3px;top:214.5px;width:28.700000000000003px;height:18.299999999999955px;background:#eaeef8;border-radius:6px"></div><svg style="left:122.7px;top:215.10000000000002px;" width="17.6" height="17.6" viewBox="0 0 17.6 17.6"><circle cx="8.8" cy="8.8" r="8.8" fill="#3a76dd"/></svg><div class="t" style="top:210.32px;font-size:12.3px;color:#3f62ac;letter-spacing:0.28px;left:159px;">FB Interacción- Reafirmante - JULIO [16 al ...</div><svg style="left:443.5px;top:213.70000000000005px;" width="7" height="7" viewBox="0 0 7 7"><circle cx="3.5" cy="3.5" r="2.6" fill="none" stroke="#63b82c" stroke-width="1.7"/></svg><div class="t" style="top:211.12px;font-size:12.3px;color:#2b2b2b;letter-spacing:0.05px;left:458px;">Scheduled</div><div class="t" style="top:211.12px;font-size:12.3px;color:#2b2b2b;letter-spacing:0.35px;right:637.65px;text-align:right;">Lowest cost</div><div class="t" style="top:211.12px;font-size:12.3px;color:#2b2b2b;letter-spacing:0.35px;right:550.15px;text-align:right;">$23.80</div><div class="t" style="top:229.12px;font-size:11.25px;color:#90949c;letter-spacing:0.05px;right:550.45px;text-align:right;">Lifetime</div><div class="t" style="top:211.12px;font-size:12.3px;color:#2b2b2b;letter-spacing:0.35px;right:461.65px;text-align:right;">&#8212;</div><div class="t" style="top:211.12px;font-size:12.3px;color:#2b2b2b;letter-spacing:0.35px;right:373.15px;text-align:right;">&#8212;</div><div class="t" style="top:211.12px;font-size:12.3px;color:#2b2b2b;letter-spacing:0.35px;right:267.65px;text-align:right;">&#8212;</div><div class="t" style="top:211.12px;font-size:12.3px;color:#2b2b2b;letter-spacing:0.35px;right:176.15px;text-align:right;">&#8212;</div><div class="t" style="top:211.12px;font-size:12.3px;color:#2b2b2b;letter-spacing:0.35px;right:65.65px;text-align:right;">$0.00</div></div><div class="a" style="left:99.5px;top:330px;width:1.0px;height:266px;background:#e9eaed;"></div><div class="a" style="left:147.0px;top:330px;width:1.0px;height:266px;background:#e9eaed;"></div><div class="a" style="left:432.5px;top:330px;width:1.0px;height:266px;background:#e9eaed;"></div><div class="a" style="left:560.0px;top:330px;width:1.0px;height:266px;background:#e9eaed;"></div><div class="a" style="left:653.5px;top:330px;width:1.0px;height:266px;background:#e9eaed;"></div><div class="a" style="left:740.0px;top:330px;width:1.0px;height:266px;background:#e9eaed;"></div><div class="a" style="left:828.5px;top:330px;width:1.0px;height:266px;background:#e9eaed;"></div><div class="a" style="left:917.0px;top:330px;width:1.0px;height:266px;background:#e9eaed;"></div><div class="a" style="left:1022.5px;top:330px;width:1.0px;height:266px;background:#e9eaed;"></div><div class="a" style="left:1114.0px;top:330px;width:1.0px;height:266px;background:#e9eaed;"></div><div class="a" style="left:1224.5px;top:330px;width:1.0px;height:266px;background:#e9eaed;"></div><div class="a" style="left:1225px;top:373.5px;width:8px;height:222.5px;background:#fff;"></div><div class="a" style="left:1225.5px;top:378px;width:5.5px;height:18px;background:#c8c8c6;border-radius:3px"></div><div class="a" style="left:57px;top:596px;width:1176px;height:1px;background:#dcdee3;"></div><div class="a" style="left:57px;top:597px;width:1176px;height:55px;background:#fff;"></div><div class="a" style="left:147.0px;top:597px;width:1.0px;height:55px;background:#eceef0;"></div><div class="a" style="left:432.5px;top:597px;width:1.0px;height:55px;background:#eceef0;"></div><div class="a" style="left:740.0px;top:597px;width:1.0px;height:55px;background:#eceef0;"></div><div class="a" style="left:828.5px;top:597px;width:1.0px;height:55px;background:#eceef0;"></div><div class="a" style="left:917.0px;top:597px;width:1.0px;height:55px;background:#eceef0;"></div><div class="a" style="left:1022.5px;top:597px;width:1.0px;height:55px;background:#eceef0;"></div><div class="a" style="left:1114.0px;top:597px;width:1.0px;height:55px;background:#eceef0;"></div><div class="a" style="left:1224.5px;top:597px;width:1.0px;height:55px;background:#eceef0;"></div><div class="a" style="left:57px;top:652px;width:1176px;height:1px;background:#e4e6e9;"></div><svg style="left:158px;top:606px;" width="6" height="10" viewBox="0 0 6 10"><path d="M1 1 L5 5 L1 9" fill="none" stroke="#1c1e21" stroke-width="1.4"/></svg><div class="t" style="top:602.28px;font-size:11.3px;color:#1c1e21;font-weight:bold;-webkit-text-stroke:0.05px currentColor;left:184.5px;">Results from 205 campaigns</div><svg style="left:341px;top:602px;" width="11" height="11" viewBox="0 0 11 11"><circle cx="5.5" cy="5.5" r="5.5" fill="#4b4f56"/><rect x="4.7" y="4.6" width="1.6" height="4" fill="#fff"/><circle cx="5.5" cy="3" r=".9" fill="#fff"/></svg><div class="t" style="top:601.42px;font-size:12.3px;color:#1c1e21;right:462.00px;text-align:right;">&#8212;</div><div class="t" style="top:601.42px;font-size:12.3px;color:#1c1e21;font-weight:bold;-webkit-text-stroke:0.05px currentColor;right:373.50px;text-align:right;">355,923</div><div class="t" style="top:618.33px;font-size:11.25px;color:#90949c;right:373.50px;text-align:right;">People</div><div class="t" style="top:601.42px;font-size:12.3px;color:#1c1e21;font-weight:bold;-webkit-text-stroke:0.05px currentColor;right:268.00px;text-align:right;">448,686</div><div class="t" style="top:618.33px;font-size:11.25px;color:#90949c;right:268.00px;text-align:right;">Total</div><div class="t" style="top:601.42px;font-size:12.3px;color:#1c1e21;right:176.50px;text-align:right;">&#8212;</div><div class="t" style="top:601.42px;font-size:12.3px;color:#1c1e21;font-weight:bold;-webkit-text-stroke:0.05px currentColor;right:66.00px;text-align:right;">$128.62</div><div class="t" style="top:618.33px;font-size:11.25px;color:#90949c;right:66.00px;text-align:right;">Total Spent</div><div class="a" style="left:61px;top:656px;width:851px;height:6px;background:#c6c6c6;border-radius:3px"></div><div class="a" style="left:56.5px;top:285px;width:1.0px;height:380px;background:#e6e6e6;"></div><svg style="left:856px;top:245px;" width="10" height="15" viewBox="0 0 10 15"><path d="M1 1 V12 L3.5 9.5 L5.5 14 L7 13.3 L5 9 H8.5 Z" fill="#111" stroke="#fff" stroke-width=".8"/></svg></div></body></html>
